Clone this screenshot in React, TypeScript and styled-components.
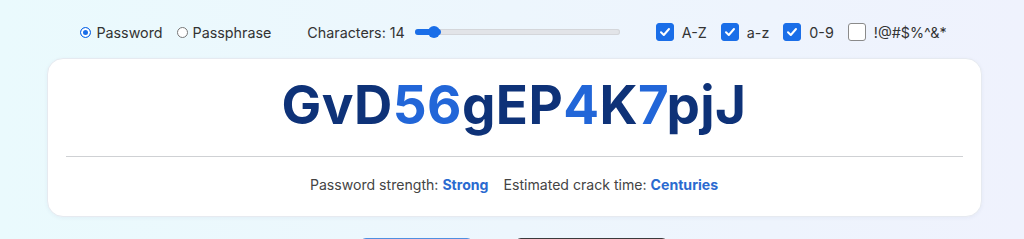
import React from 'react'
import styled, { createGlobalStyle } from 'styled-components'

const GlobalStyle = createGlobalStyle`
  html, body {
    margin: 0;
    padding: 0;
  }
  body {
    font-family: Inter, "Noto Sans", sans-serif;
    background: linear-gradient(90deg, #eafafd 0%, #edf6fd 50%, #eff2fd 100%);
    min-height: 239px;
    overflow: hidden;
  }
`

const Page = styled.div`
  display: flex;
  flex-direction: column;
  align-items: center;
  padding-top: 20px;
`

const Controls = styled.div`
  display: flex;
  align-items: center;
  gap: 36px;
  height: 24px;
  font-size: 14.3px;
  color: #333;
  margin-left: 3px;
`

const Group = styled.div<{ $gap?: number }>`
  display: flex;
  align-items: center;
  gap: ${(p) => p.$gap ?? 8}px;
`

const Option = styled.label<{ $gap?: number }>`
  display: flex;
  align-items: center;
  gap: ${(p) => p.$gap ?? 5}px;
`

const Radio = styled.span<{ $on?: boolean }>`
  width: 11px;
  height: 11px;
  border-radius: 50%;
  box-sizing: border-box;
  border: 1px solid ${(p) => (p.$on ? '#1a6ee8' : '#777')};
  background: ${(p) => (p.$on ? '#1a6ee8' : '#fff')};
  box-shadow: ${(p) => (p.$on ? 'inset 0 0 0 2px #fff' : 'none')};
`

const Slider = styled.div`
  position: relative;
  width: 205px;
  height: 6px;
  border-radius: 3px;
  background: #e2e4e8;
  box-shadow: inset 0 0 0 1px #d4d6da;
`

const Fill = styled.div`
  height: 100%;
  border-radius: 3px;
  background: #1a6ee8;
`

const Thumb = styled.div`
  position: absolute;
  top: -3px;
  width: 12px;
  height: 12px;
  border-radius: 50%;
  background: #1a6ee8;
`

const Box = styled.span<{ $on?: boolean }>`
  width: 18px;
  height: 18px;
  box-sizing: border-box;
  border-radius: 3px;
  display: flex;
  align-items: center;
  justify-content: center;
  background: ${(p) => (p.$on ? '#1a6ee8' : '#fff')};
  border: 1px solid ${(p) => (p.$on ? '#1a6ee8' : '#8a8a8a')};
`

const Card = styled.div`
  margin-top: 14px;
  margin-left: 4px;
  width: 935px;
  box-sizing: border-box;
  background: #fff;
  border-radius: 16px;
  border: 1px solid #e6eaf0;
  box-shadow: 0 1px 4px rgba(30, 60, 120, 0.05);
  padding: 14px 18px 21px;
  display: flex;
  flex-direction: column;
  align-items: center;
`

const Password = styled.div`
  font-size: 53px;
  line-height: 64px;
  font-weight: 700;
  color: #0e3278;
  letter-spacing: 0.4px;
`

const Digit = styled.span`
  color: #2266d8;
`

const Divider = styled.div`
  align-self: stretch;
  height: 1px;
  background: #cfd1d4;
  margin: 19px 0 18px;
`

const Stats = styled.div`
  display: flex;
  gap: 15px;
  font-size: 14.1px;
  line-height: 20px;
  color: #444;
`

const Value = styled.b`
  color: #2a6ad0;
  font-weight: 700;
`

const Buttons = styled.div`
  margin-top: 21px;
  display: flex;
  gap: 42px;
  margin-left: 4px;
`

const Button = styled.button<{ $dark?: boolean }>`
  width: ${(p) => (p.$dark ? 153 : 113)}px;
  height: 40px;
  border: none;
  border-radius: 6px;
  background: ${(p) => (p.$dark ? '#3a3a3c' : '#4f8fe0')};
`

const Check = () => (
  <svg width="12" height="12" viewBox="0 0 12 12">
    <path d="M2 6.3 L4.8 9 L10 3" fill="none" stroke="#fff" strokeWidth="2" strokeLinecap="round" strokeLinejoin="round" />
  </svg>
)

const sets = [
  { label: 'A-Z', on: true },
  { label: 'a-z', on: true },
  { label: '0-9', on: true },
  { label: '!@#$%^&*', on: false },
]

const pwd = 'GvD56gEP4K7pjJ'

const App = () => {
  return (
    <Page>
      <GlobalStyle />
      <Controls>
        <Group $gap={14}>
          <Option><Radio $on />Password</Option>
          <Option><Radio />Passphrase</Option>
        </Group>
        <Group $gap={10}>
          <span>Characters: 14</span>
          <Slider>
            <Fill style={{ width: '13%' }} />
            <Thumb style={{ left: '13px' }} />
          </Slider>
        </Group>
        <Group $gap={14}>
          {sets.map((s) => (
            <Option key={s.label} $gap={8}>
              <Box $on={s.on}>{s.on && <Check />}</Box>
              {s.label}
            </Option>
          ))}
        </Group>
      </Controls>
      <Card>
        <Password>
          {pwd.split('').map((c, i) =>
            /[0-9]/.test(c) ? <Digit key={i}>{c}</Digit> : <React.Fragment key={i}>{c}</React.Fragment>
          )}
        </Password>
        <Divider />
        <Stats>
          <span>Password strength: <Value>Strong</Value></span>
          <span>Estimated crack time: <Value>Centuries</Value></span>
        </Stats>
      </Card>
      <Buttons>
        <Button aria-label="Copy" />
        <Button $dark aria-label="Generate" />
      </Buttons>
    </Page>
  )
}

export default App
